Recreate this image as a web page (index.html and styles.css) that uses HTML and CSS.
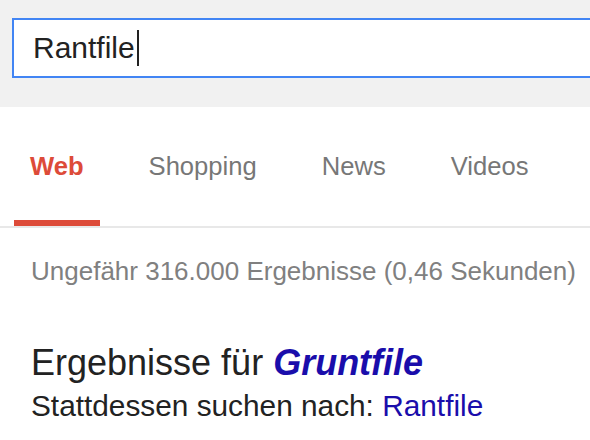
FILE: index.html
```html
<!DOCTYPE html>
<html lang="de">
<head>
<meta charset="utf-8">
<title>Rantfile - Suche</title>
<link rel="stylesheet" href="styles.css">
</head>
<body>
<header class="header">
  <div class="search-box">
    <span class="query">Rantfile</span><span class="caret"></span>
  </div>
</header>
<nav class="tabs">
  <a class="tab tab-active">Web</a>
  <a class="tab">Shopping</a>
  <a class="tab">News</a>
  <a class="tab">Videos</a>
</nav>
<main class="results">
  <div class="stats">Ungefähr 316.000 Ergebnisse (0,46 Sekunden)</div>
  <div class="showing">Ergebnisse für <a class="corrected">Gruntfile</a></div>
  <div class="instead">Stattdessen suchen nach: <a class="original">Rantfile</a></div>
</main>
</body>
</html>
```
FILE: styles.css
```css
html, body {
  margin: 0;
  padding: 0;
  background: #fff;
  overflow: hidden;
}
body {
  width: 590px;
  height: 440px;
  font-family: "Liberation Sans", Arial, sans-serif;
}
.header {
  background: #f1f1f1;
  height: 107px;
  box-sizing: border-box;
  padding: 18px 0 0 12px;
}
.search-box {
  height: 60px;
  box-sizing: border-box;
  border: 2px solid #4285f4;
  border-right: 0;
  background: #fff;
  display: flex;
  align-items: center;
  padding-left: 19px;
}
.query {
  font-size: 30px;
  line-height: 34px;
  color: #222;
}
.caret {
  width: 2px;
  height: 36px;
  background: #222;
  margin-left: 2px;
}
.tabs {
  display: flex;
  gap: 33px;
  border-bottom: 2px solid #e8e8e8;
  padding-left: 14px;
}
.tab {
  display: block;
  font-size: 25.6px;
  line-height: 30px;
  color: #777;
  padding: 44px 16px 39px;
  border-bottom: 6px solid transparent;
}
.tab-active {
  color: #dd4b39;
  font-weight: bold;
  border-bottom-color: #dd4b39;
}
.results {
  padding: 28px 0 0 31px;
}
.stats {
  font-size: 26px;
  line-height: 30px;
  color: #808080;
  white-space: nowrap;
}
.showing {
  margin-top: 57px;
  font-size: 36px;
  line-height: 40px;
  color: #222;
  white-space: nowrap;
}
.corrected {
  color: #1a0dab;
  font-weight: bold;
  font-style: italic;
}
.instead {
  margin-top: 6px;
  font-size: 29.8px;
  line-height: 34px;
  color: #222;
  white-space: nowrap;
}
.original {
  color: #1a0dab;
}
```
